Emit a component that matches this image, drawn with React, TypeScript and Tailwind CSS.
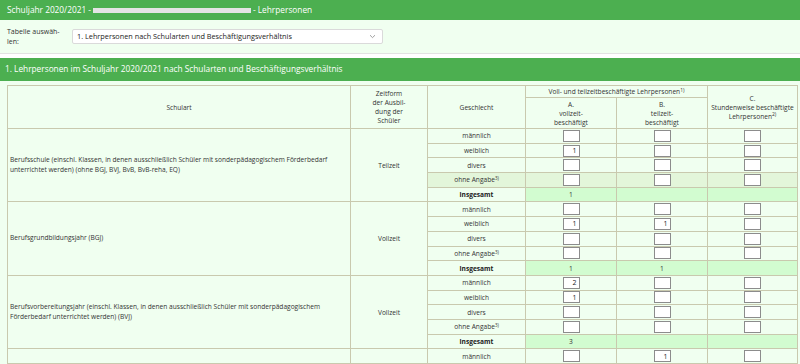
import React from 'react';

type Row = { label: string; sup?: string; a?: string; b?: string; c?: string; hl?: boolean };
type Group = { schulart: React.ReactNode; zeitform: string; rows: Row[]; total: { a?: string; b?: string; c?: string } };

const groups: Group[] = [
  {
    schulart: (
      <>
        Berufsschule (einschl. Klassen, in denen ausschließlich Schüler mit sonderpädagogischem Förderbedarf
        <br />
        unterrichtet werden) (ohne BGJ, BVJ, BvB, BvB-reha, EQ)
      </>
    ),
    zeitform: 'Teilzeit',
    rows: [
      { label: 'männlich' },
      { label: 'weiblich', a: '1' },
      { label: 'divers' },
      { label: 'ohne Angabe', sup: '3)', hl: true },
    ],
    total: { a: '1' },
  },
  {
    schulart: 'Berufsgrundbildungsjahr (BGJ)',
    zeitform: 'Vollzeit',
    rows: [
      { label: 'männlich' },
      { label: 'weiblich', a: '1', b: '1' },
      { label: 'divers' },
      { label: 'ohne Angabe', sup: '3)' },
    ],
    total: { a: '1', b: '1' },
  },
  {
    schulart: (
      <>
        Berufsvorbereitungsjahr (einschl. Klassen, in denen ausschließlich Schüler mit sonderpädagogischem
        <br />
        Förderbedarf unterrichtet werden) (BVJ)
      </>
    ),
    zeitform: 'Vollzeit',
    rows: [
      { label: 'männlich', a: '2' },
      { label: 'weiblich', a: '1' },
      { label: 'divers' },
      { label: 'ohne Angabe', sup: '3)' },
    ],
    total: { a: '3' },
  },
];

const bd = 'border border-[#c9c9ae]';

const Cell: React.FC<{ value?: string; hl?: boolean }> = ({ value, hl }) => (
  <td className={`${bd} text-center align-middle ${hl ? 'bg-[#e3f6da]' : ''}`}>
    <div className="mx-auto flex h-[12px] w-[17px] items-center justify-end border border-[#8c8c8c] bg-white pr-[2px] text-[7px] leading-none text-[#222]">
      {value}
    </div>
  </td>
);

export default function App() {
  return (
    <div className="h-[364px] w-[800px] overflow-hidden bg-white font-['Open_Sans',sans-serif] text-[#333]">
      {/* top bar */}
      <div className="flex h-[20px] items-center bg-[#4caf50] px-[7px] text-[8.3px] text-white">
        <span>Schuljahr 2020/2021 -</span>
        <span className="mx-[2px] inline-block h-[5px] w-[158px] bg-[#e4e4e4]" />
        <span>- Lehrpersonen</span>
      </div>

      {/* table picker */}
      <div className="flex h-[34px] items-center border-b border-[#e2e2e2] bg-[#f0fff0]">
        <label className="w-[72px] pl-[7px] text-[7px] leading-[10px]">
          Tabelle auswäh-
          <br />
          len:
        </label>
        <div className="flex h-[15px] w-[311px] items-center justify-between rounded-[2px] border border-[#dadada] bg-white pl-[4px] pr-[6px] text-[7.3px] text-[#222]">
          <span>1. Lehrpersonen nach Schularten und Beschäftigungsverhältnis</span>
          <svg width="7" height="5" viewBox="0 0 7 5" fill="none" stroke="#888" strokeWidth="0.8">
            <path d="M1 1.2 L3.5 3.6 L6 1.2" />
          </svg>
        </div>
      </div>

      <div className="h-[4px]" />

      {/* section title */}
      <div className="flex h-[23px] items-center bg-[#4caf50] px-[5px] text-[8.3px] text-white">
        1. Lehrpersonen im Schuljahr 2020/2021 nach Schularten und Beschäftigungsverhältnis
      </div>

      <div className="bg-[#f0fff0] pl-[7px] pr-[3px] pt-[4px]">
        <table className="w-[790px] table-fixed border-collapse text-[6.6px] leading-[9px]">
          <colgroup>
            <col className="w-[343px]" />
            <col className="w-[77px]" />
            <col className="w-[98px]" />
            <col className="w-[91px]" />
            <col className="w-[91px]" />
            <col className="w-[90px]" />
          </colgroup>
          <thead>
            <tr className="h-[12px]">
              <th rowSpan={2} className={`${bd} font-normal`}>Schulart</th>
              <th rowSpan={2} className={`${bd} font-normal`}>
                Zeitform
                <br />
                der Ausbil-
                <br />
                dung der
                <br />
                Schüler
              </th>
              <th rowSpan={2} className={`${bd} font-normal`}>Geschlecht</th>
              <th colSpan={2} className={`${bd} font-normal`}>
                Voll- und teilzeitbeschäftigte Lehrpersonen<sup className="text-[5px]">1)</sup>
              </th>
              <th rowSpan={2} className={`${bd} font-normal`}>
                C.
                <br />
                Stundenweise beschäftigte
                <br />
                Lehrpersonen<sup className="text-[5px]">2)</sup>
              </th>
            </tr>
            <tr className="h-[31px]">
              <th className={`${bd} font-normal`}>
                A.
                <br />
                vollzeit-
                <br />
                beschäftigt
              </th>
              <th className={`${bd} font-normal`}>
                B.
                <br />
                teilzeit-
                <br />
                beschäftigt
              </th>
            </tr>
          </thead>
          <tbody>
            {groups.map((g, gi) => (
              <React.Fragment key={gi}>
                {g.rows.map((r, ri) => (
                  <tr key={ri} className="h-[14.7px]">
                    {ri === 0 && (
                      <>
                        <td rowSpan={5} className={`${bd} px-[2px] text-left align-middle leading-[10.5px]`}>
                          {g.schulart}
                        </td>
                        <td rowSpan={5} className={`${bd} text-center align-middle`}>{g.zeitform}</td>
                      </>
                    )}
                    <td className={`${bd} text-center ${r.hl ? 'bg-[#e3f6da]' : ''}`}>
                      {r.label}
                      {r.sup && <sup className="text-[4.5px]">{r.sup}</sup>}
                    </td>
                    <Cell value={r.a} hl={r.hl} />
                    <Cell value={r.b} hl={r.hl} />
                    <Cell value={r.c} hl={r.hl} />
                  </tr>
                ))}
                <tr className="h-[14.7px]">
                  <td className={`${bd} text-center font-bold text-[#222]`}>insgesamt</td>
                  <td className={`${bd} bg-[#d2fcd0] text-center`}>{g.total.a}</td>
                  <td className={`${bd} bg-[#d2fcd0] text-center`}>{g.total.b}</td>
                  <td className={`${bd} bg-[#d2fcd0] text-center`}>{g.total.c}</td>
                </tr>
              </React.Fragment>
            ))}
            <tr className="h-[14.7px]">
              <td rowSpan={5} className={bd} />
              <td rowSpan={5} className={bd} />
              <td className={`${bd} text-center`}>männlich</td>
              <Cell />
              <Cell value="1" />
              <Cell />
            </tr>
          </tbody>
        </table>
      </div>
    </div>
  );
}
